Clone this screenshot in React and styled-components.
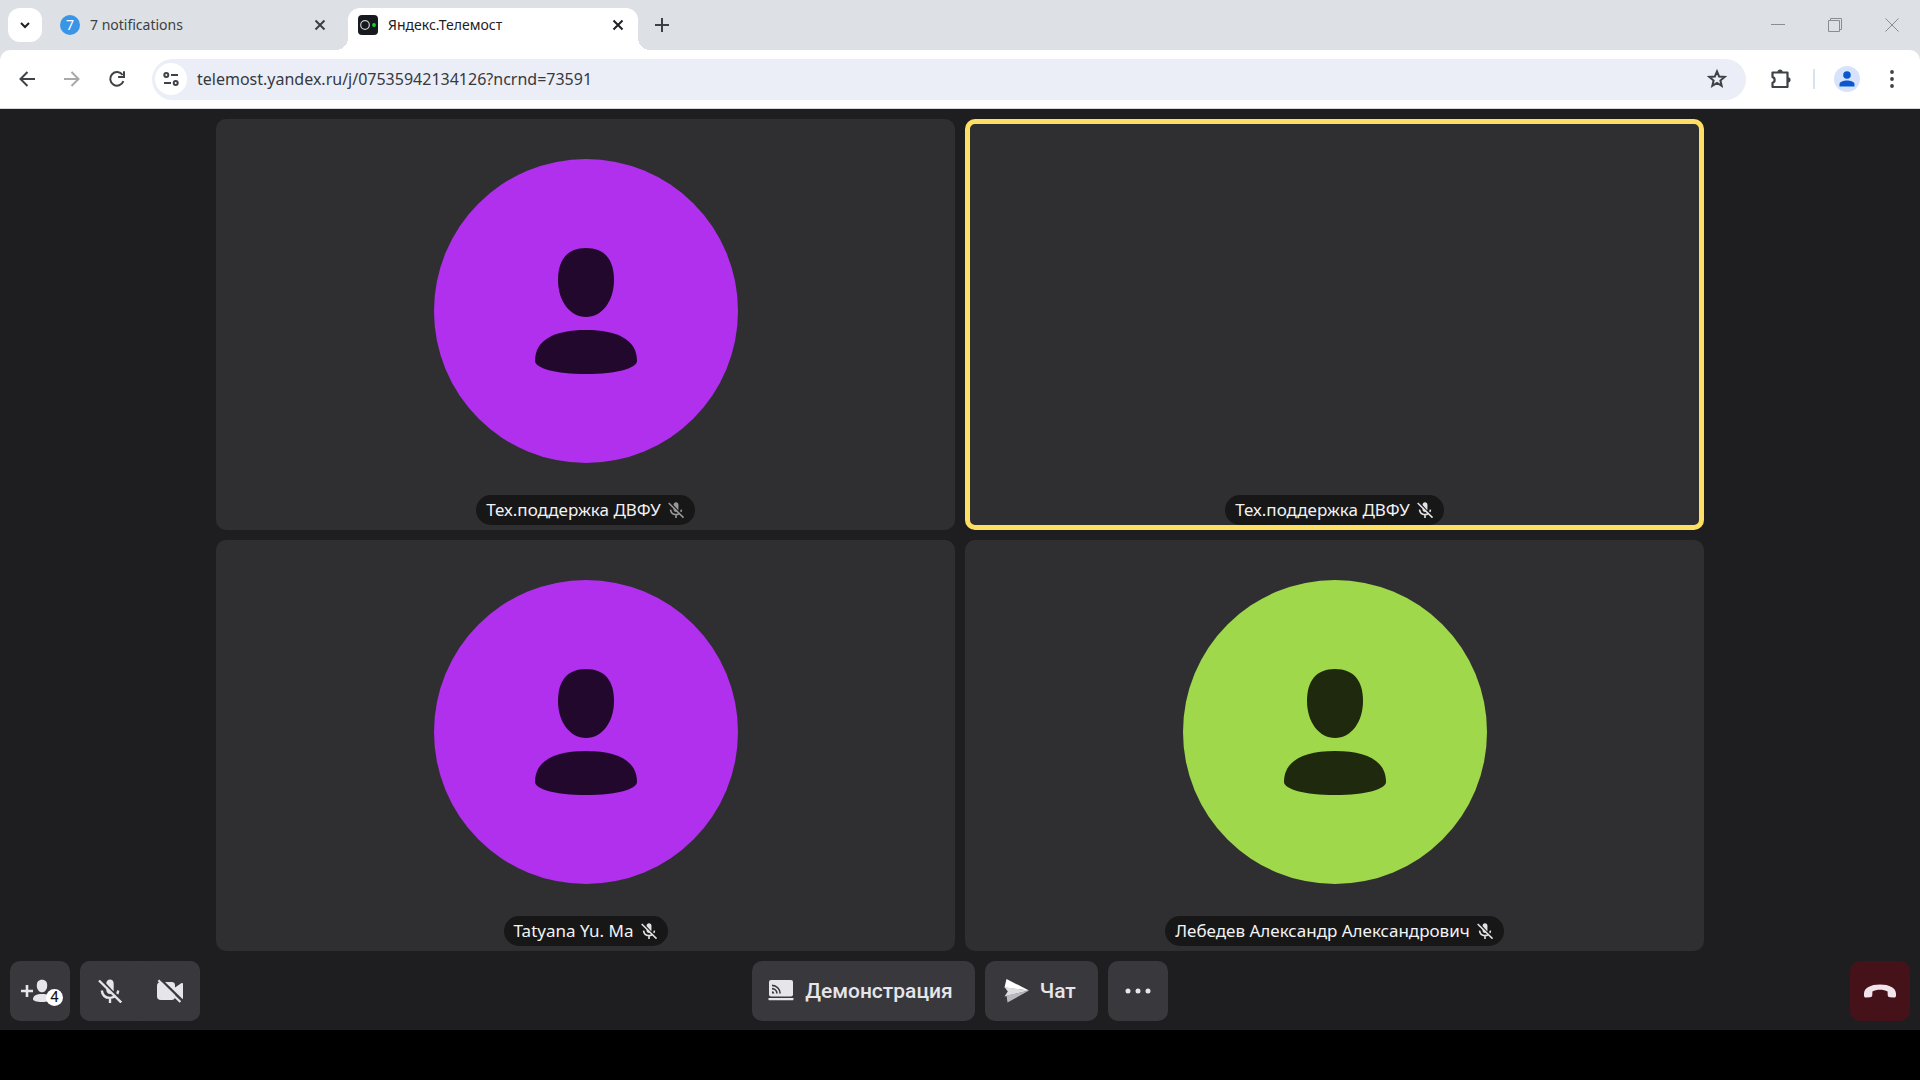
import { useState } from "react"
import styled, { createGlobalStyle, css } from "styled-components"

const GlobalStyle = createGlobalStyle`
    * {
        box-sizing: border-box;
    }

    body {
        margin: 0;
        background: #000;
        font-family: "Noto Sans", "Open Sans", sans-serif;
    }

    button {
        display: flex;
        align-items: center;
        justify-content: center;
        padding: 0;
        border: 0;
        background: none;
        color: inherit;
        font: inherit;
        cursor: pointer;
    }

    svg {
        display: block;
        flex: none;
    }
`

const Screen = styled.div`
    display: flex;
    flex-direction: column;
    height: 100vh;
    padding-bottom: 50px;
`

/* ---------- browser ---------- */

const TabStrip = styled.div`
    display: flex;
    gap: 8px;
    height: 50px;
    padding-left: 8px;
    background: #dde1e5;
    color: #3c4043;
`

const TabSearch = styled.button`
    width: 34px;
    height: 34px;
    margin-top: 8px;
    border-radius: 12px;
    background: #fff;
    color: #1f2023;
`

const Tab = styled.div`
    position: relative;
    display: flex;
    align-items: center;
    gap: 10px;
    width: 290px;
    margin-top: 8px;
    padding: 0 9px 8px 10px;
    font-size: 14px;
    line-height: 20px;

    ${(props) => props.$active && css`
        border-radius: 12px 12px 0 0;
        background: #fff;
        color: #1f2023;

        &::before,
        &::after {
            content: "";
            position: absolute;
            bottom: 0;
            width: 12px;
            height: 12px;
        }

        &::before {
            right: 100%;
            background: radial-gradient(circle at 0 0, transparent 12px, #fff 12px);
        }

        &::after {
            left: 100%;
            background: radial-gradient(circle at 100% 0, transparent 12px, #fff 12px);
        }
    `}
`

const TabTitle = styled.span`
    flex: 1;
    overflow: hidden;
    line-height: 22px;
    white-space: nowrap;
`

const TabClose = styled.button`
    width: 22px;
    height: 22px;
`

const CountIcon = styled.span`
    width: 20px;
    height: 20px;
    border-radius: 50%;
    background: #3b95e6;
    color: #fff;
    font-size: 14px;
    line-height: 20px;
    text-align: center;
`

const NewTab = styled.button`
    width: 32px;
    height: 34px;
    margin-top: 8px;
`

const WindowButtons = styled.div`
    display: flex;
    margin-left: auto;
    color: #8a8d90;
`

const WindowButton = styled.button`
    width: 57px;
`

const ToolbarBack = styled.div`
    background: #dde1e5;
`

const Toolbar = styled.div`
    display: flex;
    align-items: center;
    gap: 9px;
    height: 59px;
    padding: 0 10px 0 9px;
    border-bottom: 1px solid #d5d6d8;
    border-radius: 10px 10px 0 0;
    background: #fff;
    color: #3f4246;
`

const ToolButton = styled.button`
    width: 36px;
    height: 36px;
    opacity: ${(props) => (props.disabled ? 0.45 : 1)};
`

const AddressBar = styled.form`
    display: flex;
    flex: 1;
    align-items: center;
    height: 41px;
    margin: 0 8px;
    padding: 0 11px 0 3px;
    border-radius: 21px;
    background: #ebeef7;
`

const SiteInfo = styled.button`
    width: 32px;
    height: 32px;
    border-radius: 50%;
    background: #fff;
`

const AddressInput = styled.input`
    flex: 1;
    min-width: 0;
    padding: 0 10px;
    border: 0;
    outline: 0;
    background: none;
    color: #36393e;
    font: inherit;
    font-size: 16px;
    line-height: 24px;
`

const Divider = styled.span`
    width: 2px;
    height: 20px;
    margin: 0 5px;
    background: #d9e2f3;
`

const Profile = styled.span`
    display: flex;
    align-items: center;
    justify-content: center;
    width: 26px;
    height: 26px;
    border-radius: 50%;
    background: #d7e3fb;
    color: #0b57d0;
`

/* ---------- call ---------- */

const Call = styled.main`
    display: flex;
    flex: 1;
    flex-direction: column;
    min-height: 0;
    background: #1e1e20;
`

const Stage = styled.section`
    display: flex;
    flex: 1;
    justify-content: center;
    min-height: 0;
    padding: 10px 10px 0;
`

const Grid = styled.div`
    display: grid;
    grid-template-rows: repeat(2, minmax(0, 1fr));
    grid-template-columns: repeat(2, minmax(0, 1fr));
    gap: 10px;
    height: 100%;
    max-width: 100%;
    aspect-ratio: 93 / 52;
`

const Tile = styled.article`
    display: flex;
    flex-direction: column;
    align-items: center;
    gap: 32px;
    padding: 40px 5px 5px;
    border-radius: 10px;
    background: #2f2f31;
    box-shadow: ${(props) => (props.$speaking ? "inset 0 0 0 5px #fddf66" : "none")};
`

const Avatar = styled.div`
    flex: 1;
    min-height: 0;
    aspect-ratio: 1;
    border-radius: 50%;
    background: ${(props) => props.$color};
    color: ${(props) => props.$ink};

    svg {
        width: 100%;
        height: 100%;
    }
`

const NameTag = styled.div`
    display: flex;
    align-items: center;
    gap: 7px;
    height: 30px;
    margin-top: auto;
    padding: 0 11px 0 10px;
    border-radius: 15px;
    background: #171718;
    color: #f2f2f4;
    font-size: 17px;
    line-height: 24px;
    white-space: nowrap;
`

const MicState = styled.span`
    color: ${(props) => (props.$dim ? "#98989b" : "#e3e3e6")};
`

const Controls = styled.footer`
    display: grid;
    grid-template-columns: 1fr auto 1fr;
    padding: 10px 10px 9px;
    color: #e6e5ea;
    font-family: Roboto, "Noto Sans", sans-serif;
`

const ControlSet = styled.div`
    display: flex;
    gap: 10px;
    justify-content: ${(props) => props.$align || "flex-start"};
`

const ControlGroup = styled.div`
    display: flex;
    border-radius: 10px;
    background: #39383d;
`

const IconControl = styled.button`
    position: relative;
    width: 60px;
    height: 60px;
    border-radius: 10px;
    background: ${(props) => props.$color || "#39383d"};
`

const TextControl = styled.button`
    gap: 11px;
    height: 60px;
    padding: 0 22px 0 16px;
    border-radius: 10px;
    background: #39383d;
    font-size: 21px;
    font-weight: 500;
    line-height: 28px;
`

const Badge = styled.span`
    position: absolute;
    right: 7px;
    bottom: 15px;
    width: 17px;
    height: 17px;
    border-radius: 50%;
    background: #fff;
    color: #111;
    font-size: 15px;
    line-height: 17px;
    text-align: center;
`

/* ---------- icons ---------- */

const Stroke = ({ size = 20, width = 2, children }) => (
    <svg width={size} height={size} viewBox={`0 0 ${size} ${size}`} fill="none" stroke="currentColor" strokeWidth={width}>
        {children}
    </svg>
)

const CloseIcon = () => (
    <Stroke size={12}>
        <path d="M1.5 1.5l9 9M10.5 1.5l-9 9" />
    </Stroke>
)

const TelemostIcon = () => (
    <svg width="20" height="20" viewBox="0 0 20 20">
        <rect width="20" height="20" rx="4" fill="#16191d" />
        <circle cx="7" cy="10" r="4.3" fill="#14171b" stroke="#c9ccd0" strokeWidth="1.2" />
        <circle cx="16" cy="10" r="1.9" fill="#17d42b" />
    </svg>
)

const ReloadIcon = () => (
    <Stroke>
        <path d="M16.4 12.2A6.8 6.8 0 1 1 15.6 6" />
        <path d="M17 2.2v5.9h-5.9" />
    </Stroke>
)

const TuneIcon = () => (
    <Stroke size={18}>
        <circle cx="4.3" cy="5" r="2" />
        <path d="M9 5h7M2 13h7" />
        <circle cx="13.7" cy="13" r="2" />
    </Stroke>
)

const StarIcon = () => (
    <Stroke>
        <path d="M10 2.4l2.1 5.1 5.5.4-4.2 3.6 1.3 5.4-4.7-2.9-4.7 2.9 1.3-5.4-4.2-3.6 5.5-.4z" />
    </Stroke>
)

const ExtensionIcon = () => (
    <svg width="22" height="22" viewBox="0 0 22 22">
        <path d="M2.5 4.5h15v14.5h-15v-4.3a2.9 2.9 0 0 0 0-5.6z" fill="none" stroke="currentColor" strokeWidth="2.2" strokeLinejoin="round" />
        <path d="M7.5 4a2.6 2.6 0 0 1 5.2 0zM18 9.2a2.6 2.6 0 0 1 0 5.2z" fill="currentColor" />
    </svg>
)

const AccountIcon = () => (
    <svg width="16" height="16" viewBox="0 0 16 16" fill="currentColor">
        <circle cx="8" cy="4" r="3.8" />
        <path d="M.5 15.5v-2.2C.5 10.6 4.5 9.5 8 9.5s7.5 1.1 7.5 3.8v2.2z" />
    </svg>
)

const PersonShape = () => (
    <svg viewBox="0 0 304 304" fill="currentColor">
        <path d="M152 89c19 0 28 12 28 32 0 21-12 37-28 37s-28-16-28-37c0-20 9-32 28-32z" />
        <path d="M152 171c32 0 51 10 51 31 0 7-20 13-51 13s-51-6-51-13c0-21 19-31 51-31z" />
    </svg>
)

const MicOffIcon = ({ size }) => (
    <svg width={size} height={size} viewBox="0 0 24 24" fill="none" stroke="currentColor">
        <path d="M8.3 4.6C8.4 1.8 10 .5 12 .5s3.7 1.3 3.7 4.3v5.7c0 .7-.1 1.2-.3 1.7z" fill="currentColor" stroke="none" />
        <path d="M8.3 9v1.8c0 2.7 1.5 4.2 3.7 4.2.9 0 1.6-.2 2.2-.7z" fill="currentColor" stroke="none" />
        <path d="M3.8 11.5c.5 4.6 3.7 7.4 8.2 7.4 1.8 0 3.4-.5 4.7-1.3M20.2 11.5c-.2 1.4-.5 2.4-1 3.4M12 19v5" strokeWidth="2.4" />
        <path d="M1 1.5l22.3 22" strokeWidth="2.4" />
    </svg>
)

const CameraOffIcon = () => (
    <svg width="26" height="24" viewBox="0 0 26 24">
        <path d="M4 3h10.5c2.3 0 3.5 1.1 3.5 3.2v2.3l6.2-4.3c.9-.6 1.8-.2 1.8.8v14c0 1-.9 1.4-1.8.8L18 15.5v2.3c0 2.1-1.2 3.2-3.5 3.2H4c-2.6 0-4-1.3-4-3.8V6.8C0 4.3 1.4 3 4 3z" fill="currentColor" />
        <path d="M3.2 0l22 21.5" stroke="#39383d" strokeWidth="2.4" />
        <path d="M1.4 1.2l22 21.8" stroke="currentColor" strokeWidth="2.2" />
    </svg>
)

const InviteIcon = () => (
    <svg width="40" height="24" viewBox="0 0 40 24" fill="currentColor">
        <path d="M5.7 6h2.6v4.7H13v2.6H8.3V18H5.7v-4.7H1v-2.6h4.7z" />
        <path d="M22 .8c3.6 0 5.2 2.2 5.2 5.6 0 3.8-2.1 6.9-5.2 6.9s-5.2-3.1-5.2-6.9C16.8 3 18.4.8 22 .8z" />
        <path d="M22 15c5.500 0 9 1.700 9 5.200 0 1.500-3.500 2.800-9 2.800s-9-1.300-9-2.800c0-3.500 3.500-5.200 9-5.200z" />
    </svg>
)

const ShareIcon = () => (
    <svg width="26" height="24" viewBox="0 0 26 24">
        <rect x="1" y="1" width="24" height="16.5" rx="2" fill="currentColor" />
        <path d="M.5 19h25v1.2c0 .6-.4 1-1 1h-23c-.6 0-1-.4-1-1z" fill="currentColor" />
        <g fill="none" stroke="#39383d" strokeWidth="1.6">
            <path d="M4 6.4a8.1 8.1 0 0 1 8.1 8.1M4 9.6a4.9 4.9 0 0 1 4.9 4.9" />
        </g>
        <path d="M4 12.2a2.3 2.3 0 0 1 2.3 2.3H4z" fill="#39383d" />
    </svg>
)

const ChatIcon = () => (
    <svg width="28" height="24" viewBox="-2 0 28 24">
        <path d="M3.5 0l22.500 11.500L1.500 8.500z" fill="#fff" />
        <path d="M1.500 8L26 11.500 1.500 17.500l3.300-5z" fill="#deDDE2" />
        <path d="M26 11.500L4.500 23.500l-1-7z" fill="#b9b8bd" />
    </svg>
)

const HangUpIcon = () => (
    <svg width="32" height="14" viewBox="0 0 32 14">
        <path d="M16 .5C25.5.5 32 3.9 32 9.800v1.700c0 1.400-.8 2.200-2.200 2.100l-3.800-.3c-1.400-.1-2.200-.9-2.300-2.300l-.1-3.500C21.500 6.300 18.900 5.800 16 5.800s-5.500.5-7.600 1.700L8.300 11c-.1 1.400-.9 2.200-2.300 2.300l-3.800.3C.8 13.700 0 12.900 0 11.500V9.800C0 3.900 6.500.5 16 .5z" fill="#f3e3eb" />
    </svg>
)

const people = [
    { id: 1, name: "Тех.поддержка ДВФУ", color: "#b030ee", ink: "#23082e", dim: true },
    { id: 2, name: "Тех.поддержка ДВФУ", speaking: true },
    { id: 3, name: "Tatyana Yu. Ma", color: "#b030ee", ink: "#23082e" },
    { id: 4, name: "Лебедев Александр Александрович", color: "#a0d84b", ink: "#1f290d" },
]

function Browser() {
    const [url, setUrl] = useState("telemost.yandex.ru/j/07535942134126?ncrnd=73591")

    return (
        <header>
            <TabStrip>
                <TabSearch aria-label="Search tabs">
                    <Stroke size={12}><path d="M2 4l4 4 4-4" /></Stroke>
                </TabSearch>
                <Tab>
                    <CountIcon>7</CountIcon>
                    <TabTitle>7 notifications</TabTitle>
                    <TabClose aria-label="Close tab"><CloseIcon /></TabClose>
                </Tab>
                <Tab $active>
                    <TelemostIcon />
                    <TabTitle>Яндекс.Телемост</TabTitle>
                    <TabClose aria-label="Close tab"><CloseIcon /></TabClose>
                </Tab>
                <NewTab aria-label="New tab">
                    <Stroke size={14}><path d="M7 0v14M0 7h14" /></Stroke>
                </NewTab>
                <WindowButtons>
                    <WindowButton aria-label="Minimize">
                        <Stroke size={14} width={1}><path d="M0 6.5h14" /></Stroke>
                    </WindowButton>
                    <WindowButton aria-label="Restore">
                        <Stroke size={14} width={1}><path d="M.5 2.5h11v11H.5zM2.5 2.5v-2h11v11h-2" /></Stroke>
                    </WindowButton>
                    <WindowButton aria-label="Close">
                        <Stroke size={14} width={1}><path d="M.5.5l13 13M13.5.5l-13 13" /></Stroke>
                    </WindowButton>
                </WindowButtons>
            </TabStrip>
            <ToolbarBack>
                <Toolbar>
                    <ToolButton aria-label="Back">
                        <Stroke><path d="M18 10H4M10.5 3l-7 7 7 7" /></Stroke>
                    </ToolButton>
                    <ToolButton aria-label="Forward" disabled>
                        <Stroke><path d="M2 10h14M9.5 3l7 7-7 7" /></Stroke>
                    </ToolButton>
                    <ToolButton aria-label="Reload"><ReloadIcon /></ToolButton>
                    <AddressBar onSubmit={(e) => e.preventDefault()}>
                        <SiteInfo type="button" aria-label="Site information"><TuneIcon /></SiteInfo>
                        <AddressInput aria-label="Address" value={url} onChange={(e) => setUrl(e.target.value)} />
                        <ToolButton type="button" aria-label="Bookmark"><StarIcon /></ToolButton>
                    </AddressBar>
                    <ToolButton aria-label="Extensions"><ExtensionIcon /></ToolButton>
                    <Divider />
                    <ToolButton aria-label="Profile"><Profile><AccountIcon /></Profile></ToolButton>
                    <ToolButton aria-label="Menu">
                        <svg width="4" height="18" viewBox="0 0 4 18" fill="currentColor">
                            <circle cx="2" cy="2" r="1.9" />
                            <circle cx="2" cy="9" r="1.9" />
                            <circle cx="2" cy="16" r="1.9" />
                        </svg>
                    </ToolButton>
                </Toolbar>
            </ToolbarBack>
        </header>
    )
}

function Participant({ person }) {
    return (
        <Tile $speaking={person.speaking}>
            {person.color && (
                <Avatar $color={person.color} $ink={person.ink}>
                    <PersonShape />
                </Avatar>
            )}
            <NameTag>
                <span>{person.name}</span>
                <MicState $dim={person.dim}><MicOffIcon size={16} /></MicState>
            </NameTag>
        </Tile>
    )
}

export default function App() {
    return (
        <Screen>
            <GlobalStyle />
            <Browser />
            <Call>
                <Stage>
                    <Grid>
                        {people.map((person) => (
                            <Participant key={person.id} person={person} />
                        ))}
                    </Grid>
                </Stage>
                <Controls>
                    <ControlSet>
                        <IconControl aria-label="Участники">
                            <InviteIcon />
                            <Badge>4</Badge>
                        </IconControl>
                        <ControlGroup>
                            <IconControl aria-label="Микрофон"><MicOffIcon size={24} /></IconControl>
                            <IconControl aria-label="Камера"><CameraOffIcon /></IconControl>
                        </ControlGroup>
                    </ControlSet>
                    <ControlSet>
                        <TextControl><ShareIcon />Демонстрация</TextControl>
                        <TextControl><ChatIcon />Чат</TextControl>
                        <IconControl aria-label="Ещё">
                            <svg width="26" height="6" viewBox="0 0 26 6" fill="currentColor">
                                <circle cx="3" cy="3" r="2.5" />
                                <circle cx="13" cy="3" r="2.5" />
                                <circle cx="23" cy="3" r="2.5" />
                            </svg>
                        </IconControl>
                    </ControlSet>
                    <ControlSet $align="flex-end">
                        <IconControl $color="#45121a" aria-label="Выйти"><HangUpIcon /></IconControl>
                    </ControlSet>
                </Controls>
            </Call>
        </Screen>
    )
}
